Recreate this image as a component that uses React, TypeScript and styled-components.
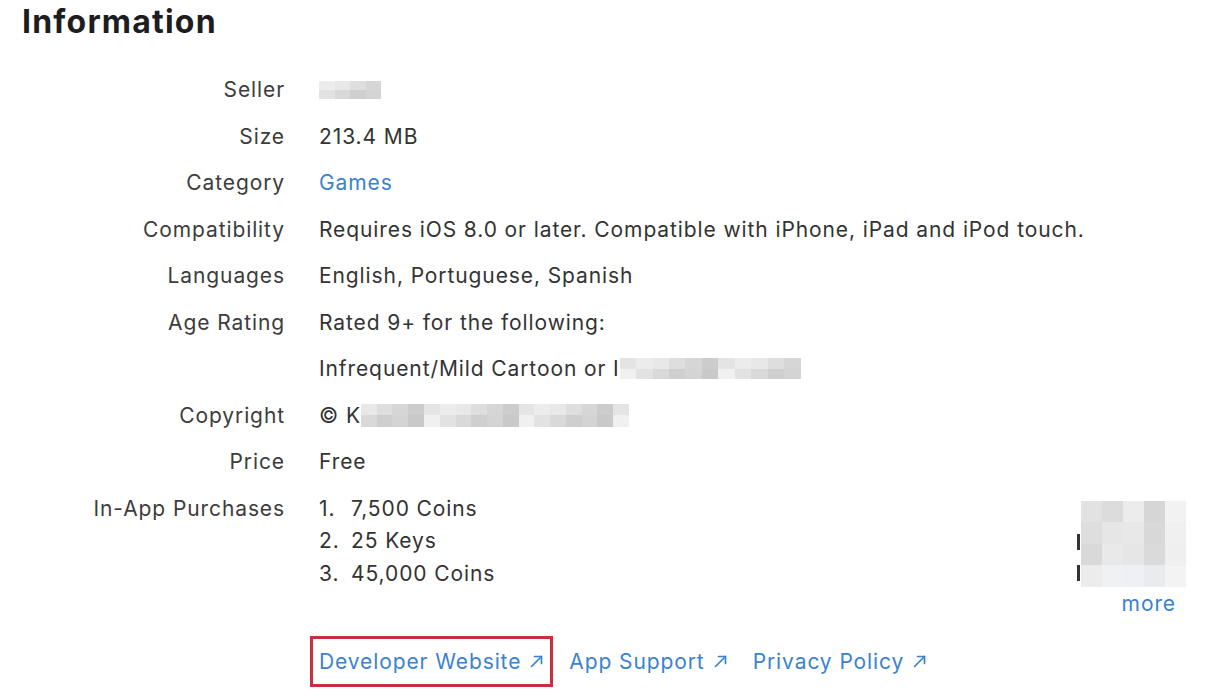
import React from "react";
import styled, { createGlobalStyle } from "styled-components";

const Global = createGlobalStyle`
  html, body { margin: 0; padding: 0; background: #fff; }
  body { font-family: Inter, "Noto Sans", sans-serif; color: #333; }
`;

const Page = styled.div`
  width: 1208px;
  height: 698px;
  overflow: hidden;
  box-sizing: border-box;
`;

const Heading = styled.h2`
  margin: 0 0 23px 22px;
  font-size: 32px;
  line-height: 44px;
  font-weight: 700;
  color: #1d1d1f;
  letter-spacing: 1.2px;
`;

const Grid = styled.dl`
  display: grid;
  grid-template-columns: 284px 867px;
  column-gap: 35px;
  margin: 0;
  font-size: 21px;
  letter-spacing: 0.9px;
`;

const Label = styled.dt`
  text-align: right;
  line-height: 46.5px;
  color: #3c3c3c;
  margin-right: -1px;
`;

const Value = styled.dd`
  margin: 0;
  line-height: 46.5px;
  color: #333;
`;

const Link = styled.a`
  color: #3a82d0;
  text-decoration: none;
`;

const Blur = styled.span<{ $w: number; $h: number }>`
  display: inline-grid;
  vertical-align: middle;
  width: ${(p) => p.$w}px;
  height: ${(p) => p.$h}px;
  grid-auto-flow: column;
  grid-template-rows: repeat(2, 1fr);
  margin-top: -3px;
`;

const Cell = styled.span<{ $c: string }>`
  background: ${(p) => p.$c};
`;

const IapWrap = styled.div`
  display: flex;
  justify-content: space-between;
  align-items: flex-start;
  padding-top: 7px;
`;

const List = styled.ol`
  margin: 0;
  padding: 0;
  list-style: none;
  line-height: 32.5px;
`;

const Num = styled.span`
  display: inline-block;
  width: 32px;
`;

const PriceCol = styled.div`
  position: relative;
  margin-top: 8px;
  width: 105px;
  height: 86px;
  display: grid;
  grid-template-columns: repeat(5, 1fr);
  grid-template-rows: repeat(4, 1fr);
`;

const Stub = styled.span<{ $top: number }>`
  position: absolute;
  left: -4px;
  top: ${(p) => p.$top}px;
  width: 3px;
  height: 16px;
  background: #333;
`;

const More = styled.div`
  text-align: right;
  padding-right: 10px;
  line-height: 32.5px;
  margin-top: -2px;
`;

const Links = styled.div`
  display: flex;
  gap: 25px;
  margin: 24px 0 0 319px;
  font-size: 21px;
  letter-spacing: 0.9px;
`;

const ExtLink = styled.a<{ $boxed?: boolean }>`
  display: inline-flex;
  align-items: center;
  gap: 8px;
  height: 33px;
  color: #3a82d0;
  text-decoration: none;
  outline: ${(p) => (p.$boxed ? "3px solid #c8303f" : "none")};
  outline-offset: 6px;
`;

const Arrow = () => (
  <svg width="15" height="15" viewBox="0 0 15 15" fill="none" stroke="#3a82d0" strokeWidth="1.7" strokeLinecap="round" strokeLinejoin="round">
    <path d="M2.5 12.5 L12.5 2.5" />
    <path d="M5.5 2.5 H12.5 V9.5" />
  </svg>
);

const shades = ["#d9d9d9", "#e4e4e4", "#cfcfcf", "#ececec", "#d4d4d4", "#e8e8e8", "#c9c9c9", "#dedede", "#f0f0f0", "#d6d6d6", "#e2e2e2", "#cccccc"];

function Mosaic({ w, h, cols, seed }: { w: number; h: number; cols: number; seed: number }) {
  const cells = [];
  for (let i = 0; i < cols * 2; i++) {
    cells.push(<Cell key={i} $c={shades[(i * 7 + seed) % shades.length]} />);
  }
  return (
    <Blur $w={w} $h={h}>
      {cells}
    </Blur>
  );
}

const priceShades = [
  "#e2e2e2", "#dcdcdc", "#ececec", "#d6d6d6", "#f2f2f2",
  "#dedede", "#e6e6e6", "#e8e8e8", "#d8d8d8", "#f0f0f0",
  "#d9d9d9", "#e9e9e9", "#e6e6e6", "#dadada", "#efefef",
  "#ececec", "#f0f1f3", "#eef0f4", "#e9ebef", "#f3f3f3",
];

export default function App() {
  return (
    <Page>
      <Global />
      <Heading>Information</Heading>
      <Grid>
        <Label>Seller</Label>
        <Value>
          <Mosaic w={62} h={18} cols={4} seed={3} />
        </Value>
        <Label>Size</Label>
        <Value>213.4 MB</Value>
        <Label>Category</Label>
        <Value>
          <Link>Games</Link>
        </Value>
        <Label>Compatibility</Label>
        <Value>Requires iOS 8.0 or later. Compatible with iPhone, iPad and iPod touch.</Value>
        <Label>Languages</Label>
        <Value>English, Portuguese, Spanish</Value>
        <Label>Age Rating</Label>
        <Value>
          Rated 9+ for the following:
          <br />
          Infrequent/Mild Cartoon or I<Mosaic w={181} h={21} cols={11} seed={1} />
        </Value>
        <Label>Copyright</Label>
        <Value>
          © K<Mosaic w={268} h={23} cols={17} seed={5} />
        </Value>
        <Label>Price</Label>
        <Value>Free</Value>
        <Label>In-App Purchases</Label>
        <Value>
          <IapWrap>
            <List>
              <li>
                <Num>1.</Num>7,500 Coins
              </li>
              <li>
                <Num>2.</Num>25 Keys
              </li>
              <li>
                <Num>3.</Num>45,000 Coins
              </li>
            </List>
            <PriceCol>
              {priceShades.map((c, i) => (
                <Cell key={i} $c={c} />
              ))}
              <Stub $top={33} />
              <Stub $top={64} />
            </PriceCol>
          </IapWrap>
          <More>
            <Link>more</Link>
          </More>
        </Value>
      </Grid>
      <Links>
        <ExtLink $boxed>
          Developer Website
          <Arrow />
        </ExtLink>
        <ExtLink>
          App Support
          <Arrow />
        </ExtLink>
        <ExtLink>
          Privacy Policy
          <Arrow />
        </ExtLink>
      </Links>
    </Page>
  );
}
